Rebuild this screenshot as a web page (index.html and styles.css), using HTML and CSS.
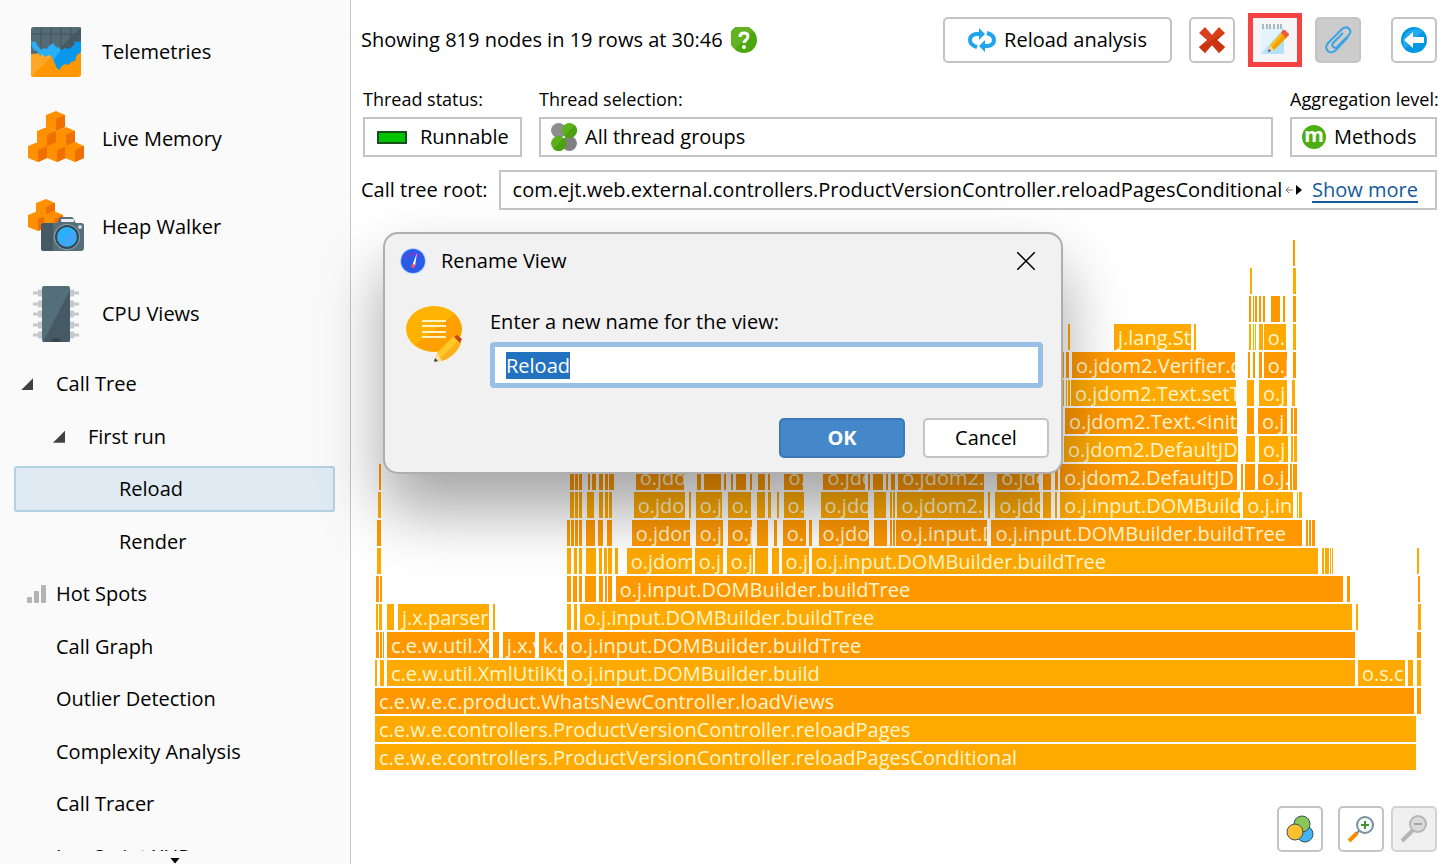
FILE: index.html
```html
<!DOCTYPE html>
<html lang="en">
<head>
    <meta charset="UTF-8">
    <meta name="viewport" content="width=device-width, initial-scale=1.0">
    <title>Call Tree - Reload</title>
    <link rel="stylesheet" href="styles.css">
</head>
<body>
    <nav class="sidebar">
        <ul class="sections">
            <li><a href="#">
                <svg class="section-icon" viewBox="0 0 56 56">
                    <rect x="3" y="3" width="50" height="50" rx="3" fill="#ff9800"/>
                    <path d="M3 53L30 26H3z" fill="#ffa726"/>
                    <path d="M3 30V6q0-3 3-3h44q3 0 3 3v20z" fill="#546a75"/>
                    <path d="M53 3L30 26h23z" fill="#455a64"/>
                    <path d="M3 10h50M13 3v20M23 3v20M33 3v20M43 3v20" stroke="#43555e" stroke-width="1"/>
                    <path d="M3 17l2 1 2-1 3 5 3 4 3-2 3 1 2-3 4-3 3 4 4 1 1 3-3 13-4-1-2-6-3-2-4 2-3-3-2 2-3-5-3-1-2-3z" fill="#29b0f6"/>
                    <path d="M32 27l5-3 4 1 5-4 1-4 3 1 3-1v11l-4 3-2 6-4 1-3 3-3-1-3 2-3 4-3-3-2-8z" fill="#0c98ea"/>
                </svg>
                Telemetries</a></li>
            <li><a href="#">
                <svg class="section-icon" viewBox="0 0 56 56">
                    <defs>
                        <g id="cube">
                            <path d="M0 4l10-4 9 4v12l-9 4-10-4z" fill="#ff9100"/>
                            <path d="M19 4v12l-9 4V8z" fill="#ef7000"/>
                        </g>
                    </defs>
                    <use href="#cube" x="18" y="0"/>
                    <use href="#cube" x="9" y="16"/>
                    <use href="#cube" x="28" y="16"/>
                    <use href="#cube" x="0" y="31"/>
                    <use href="#cube" x="19" y="31"/>
                    <use href="#cube" x="37" y="31"/>
                </svg>
                Live Memory</a></li>
            <li><a href="#">
                <svg class="section-icon" viewBox="0 0 56 56">
                    <use href="#cube" x="8" y="0"/>
                    <use href="#cube" x="0" y="12"/>
                    <use href="#cube" x="16" y="12"/>
                    <path d="M29 25l2-5q1-2 3-2h9q2 0 3 2l2 5z" fill="#546e7a"/>
                    <rect x="33" y="20" width="13" height="3" rx="1" fill="#eceff1"/>
                    <rect x="13" y="24" width="43" height="28" rx="3" fill="#546e7a"/>
                    <path d="M13 27q0-3 3-3h9v28h-9q-3 0-3-3z" fill="#455a64"/>
                    <circle cx="39" cy="38" r="13" fill="#90a4ae"/>
                    <circle cx="39" cy="38" r="12" fill="#37474f"/>
                    <circle cx="39" cy="38" r="10" fill="#29b0f6"/>
                    <path d="M46 31a10 10 0 0 1-14 14z" fill="#42a5f5"/>
                    <circle cx="52" cy="28" r="2" fill="#cfd8dc"/>
                </svg>
                Heap Walker</a></li>
            <li><a href="#">
                <svg class="section-icon" viewBox="0 0 56 56">
                    <g stroke="#c3c9cc" stroke-width="3">
                        <path d="M5 7h46M5 18h46M5 28h46M5 39h46M5 49h46"/>
                        <path d="M10 7h36M10 18h36M10 28h36M10 39h36M10 49h36" stroke-width="7"/>
                    </g>
                    <rect x="14" y="0" width="28" height="56" rx="2" fill="#546e7a"/>
                    <path d="M42 4v50q0 2-2 2H15z" fill="#455a64"/>
                    <path d="M23 56a5 4 0 0 1 10 0z" fill="#37474f"/>
                </svg>
                CPU Views</a></li>
        </ul>
        <div class="tree-clip">
            <ul class="tree">
                <li class="level-1 open"><a href="#">Call Tree</a></li>
                <li class="level-2 open"><a href="#">First run</a></li>
                <li class="level-3 selected"><a href="#">Reload</a></li>
                <li class="level-3"><a href="#">Render</a></li>
                <li class="level-1">
                    <svg class="bars-icon" viewBox="0 0 20 20" fill="#b4b4b4">
                        <rect x="0" y="13" width="5" height="6" rx="1"/>
                        <rect x="7" y="7" width="5" height="12" rx="1"/>
                        <rect x="14" y="1" width="5" height="18" rx="1"/>
                    </svg>
                    <a href="#">Hot Spots</a></li>
                <li class="level-1"><a href="#">Call Graph</a></li>
                <li class="level-1"><a href="#">Outlier Detection</a></li>
                <li class="level-1"><a href="#">Complexity Analysis</a></li>
                <li class="level-1"><a href="#">Call Tracer</a></li>
                <li class="level-1"><a href="#">JavaScript XHR</a></li>
            </ul>
        </div>
        <button class="scroll-down" aria-label="Scroll down"></button>
    </nav>

    <main class="content">
        <header class="toolbar">
            <span class="status">Showing 819 nodes in 19 rows at 30:46</span>
            <button class="help-btn" aria-label="Help">
                <svg viewBox="0 0 26 26">
                    <circle cx="13" cy="13" r="13" fill="#4ea60f"/>
                    <path d="M22 4A13 13 0 1 0 4 22z" fill="#62b323"/>
                    <path d="M9 10q0-4 4-4t4 3.500q0 2-2 3.500t-2 3" fill="none" stroke="#fff" stroke-width="3"/>
                    <circle cx="13" cy="20" r="2" fill="#fff"/>
                </svg>
            </button>
            <button class="btn reload-btn">
                <svg viewBox="0 0 28 24" fill="none" stroke="#1ea5ee" stroke-width="4">
                    <path d="M9 19Q2 17 2 12t6-6h4"/>
                    <path d="M19 5q7 2 7 7t-6 6h-3"/>
                    <path d="M11 0l6 6-6 6zM17 12l-6 6 6 6z" fill="#1ea5ee" stroke="none"/>
                </svg>
                Reload analysis</button>
            <button class="btn icon-btn delete-btn" aria-label="Delete">
                <svg viewBox="0 0 28 28">
                    <path d="M7 1l7 8 7-8 6 6-8 7 8 7-6 6-7-8-7 8-6-6 8-7-8-7z" fill="#d8401b"/>
                    <path d="M27 7l-8 7 8 7-6 6-7-8-7 8-6-6z" fill="#c93510"/>
                </svg>
            </button>
            <button class="btn icon-btn rename-btn" aria-label="Rename view">
                <svg viewBox="0 0 28 32">
                    <rect x="0" y="4" width="23" height="26" fill="#e3f4fc"/>
                    <path d="M23 4v26H0z" fill="#b3e1f7"/>
                    <path d="M2 0v5M6 0v5M9 0v5M13 0v5M17 0v5M20 0v5" stroke="#607d8b" stroke-width="1"/>
                    <path d="M7 28l2-7L21 8l5 5-13 13z" fill="#fbbc16"/>
                    <path d="M11 23L23 10l3 3-13 13z" fill="#f59f00"/>
                    <path d="M7 28l2-7 4 5z" fill="#f2d7a5"/>
                    <path d="M7 28l1-3 2 2z" fill="#37474f"/>
                    <path d="M20 9l2-3h2l4 4v1l-3 3z" fill="#ef5a3c"/>
                </svg>
            </button>
            <button class="btn icon-btn attach-btn" aria-label="Attach">
                <svg viewBox="0 0 28 28" fill="none" stroke="#3ba4e4" stroke-width="2">
                    <path d="M19 7L9 17c-2 3 1 6 4 4L25 9c4-5-2-10-7-6L4 17c-5 6 2 13 8 7l12-13" />
                </svg>
            </button>
            <button class="btn icon-btn back-btn" aria-label="Back">
                <svg viewBox="0 0 26 26">
                    <circle cx="13" cy="13" r="13" fill="#0297e3"/>
                    <path d="M22 4A13 13 0 0 0 4 22z" fill="#22a9ee"/>
                    <path d="M3 13l9-8v5h11v6H12v5z" fill="#fff"/>
                </svg>
            </button>
        </header>

        <div class="filters">
            <div class="filter">
                <label for="threadStatus">Thread status:</label>
                <div class="combo status-combo">
                    <span class="status-color"></span>
                    <select id="threadStatus"><option>Runnable</option></select>
                </div>
            </div>
            <div class="filter filter-wide">
                <label for="threadSelection">Thread selection:</label>
                <div class="combo">
                    <svg class="combo-icon" viewBox="0 0 24 26">
                        <circle cx="7" cy="7" r="7" fill="#8d8d8d"/>
                        <circle cx="17" cy="19" r="7" fill="#808080"/>
                        <circle cx="17" cy="7" r="7" fill="#5cb01c"/>
                        <circle cx="7" cy="19" r="7" fill="#5cb01c"/>
                        <path d="M22 2a7 7 0 0 1-10 10zM12 14a7 7 0 0 1-10 10z" fill="#4ba10e"/>
                    </svg>
                    <select id="threadSelection"><option>All thread groups</option></select>
                </div>
            </div>
            <div class="filter filter-level">
                <label for="aggregation">Aggregation level:</label>
                <div class="combo">
                    <span class="method-icon">m</span>
                    <select id="aggregation"><option>Methods</option></select>
                </div>
            </div>
        </div>

        <div class="root-row">
            <span>Call tree root:</span>
            <div class="root-box">
                <span class="root-name">com.ejt.web.external.controllers.ProductVersionController.reloadPagesConditional</span>
                <svg class="root-arrow" viewBox="0 0 8 8"><path d="M8 4H1M4 1L1 4l3 3" fill="none" stroke="#777"/></svg>
                <span class="root-next"></span>
                <a href="#">Show more</a>
            </div>
        </div>

        <div class="flame" id="flame"></div>

        <footer class="zoom-bar">
            <button class="btn icon-btn" aria-label="Colors">
                <svg viewBox="0 0 28 28" stroke="#37505c" stroke-width="1">
                    <circle cx="19" cy="19" r="8" fill="#42b4f5"/>
                    <circle cx="16" cy="9" r="8" fill="#8cc657"/>
                    <circle cx="9" cy="17" r="8" fill="#fbc02d"/>
                </svg>
            </button>
            <button class="btn icon-btn zoom-in" aria-label="Zoom in">
                <svg viewBox="0 0 28 28">
                    <path d="M12 16l-3 3" stroke="#607d8b" stroke-width="2"/>
                    <path d="M10 18l-8 8" stroke="#fb8c00" stroke-width="4"/>
                    <circle cx="18" cy="10" r="8" fill="#f3f8fb" stroke="#78909c" stroke-width="2"/>
                    <path d="M14 10h8M18 6v8" stroke="#43912f" stroke-width="2"/>
                </svg>
            </button>
            <button class="btn icon-btn" aria-label="Zoom out" disabled>
                <svg viewBox="0 0 28 28">
                    <path d="M13 15L2 26" stroke="#b5b5b5" stroke-width="4"/>
                    <circle cx="18" cy="9" r="8" fill="#dadada" stroke="#b5b5b5" stroke-width="2"/>
                    <path d="M14 9h8" stroke="#a5a5a5" stroke-width="2"/>
                </svg>
            </button>
        </footer>
    </main>

    <dialog class="rename-dialog" open aria-labelledby="dialogTitle">
        <div class="dialog-head">
            <svg class="app-icon" viewBox="0 0 26 26">
                <circle cx="13" cy="13" r="13" fill="#b5d5fb"/>
                <circle cx="13" cy="13" r="12" fill="#2a5be8"/>
                <path d="M5 10q8-8 15-1" fill="none" stroke="#7a3bd0" stroke-width="2"/>
                <path d="M17 5l-2 13h-3z" fill="#fff"/>
                <circle cx="13" cy="18" r="2" fill="#f0506a"/>
            </svg>
            <h2 id="dialogTitle">Rename View</h2>
            <button class="close-btn" aria-label="Close">
                <svg viewBox="0 0 18 18"><path d="M0 0l18 18M18 0L0 18" stroke="#000" stroke-width="1.500"/></svg>
            </button>
        </div>
        <form class="dialog-body" method="dialog">
            <svg class="note-icon" viewBox="0 0 56 56">
                <ellipse cx="28" cy="23" rx="28" ry="23" fill="#ffb300"/>
                <path d="M49 8Q62 24 49 39 30 52 9 39z" fill="#ffa000"/>
                <path d="M16 15h24M16 20h24M16 26h24M16 31h24" stroke="#fff3c4" stroke-width="2"/>
                <path d="M28 56l3-9 17-17 7 5c0 9-12 19-20 20z" fill="#ffca28"/>
                <path d="M34 52l18-17 3 1c-2 8-12 18-20 19z" fill="#fbb01d"/>
                <path d="M28 56l3-9 5 8z" fill="#f6dfb0"/>
                <path d="M28 56l1-4 3 3z" fill="#37474f"/>
                <path d="M48 31l3-2 5 4-2 4z" fill="#c8451c"/>
            </svg>
            <div class="field">
                <label for="viewName">Enter a new name for the view:</label>
                <input type="text" id="viewName" value="Reload" autocomplete="off">
            </div>
            <div class="dialog-buttons">
                <button class="btn ok-btn">OK</button>
                <button class="btn cancel-btn">Cancel</button>
            </div>
        </form>
    </dialog>

    <script src="flame.js"></script>
</body>
</html>
```
FILE: styles.css
```css
* {
    box-sizing: border-box;
}
body {
    margin: 0;
    display: flex;
    height: 100vh;
    overflow: hidden;
    font-family: "Open Sans", "Noto Sans", sans-serif;
    font-size: 20px;
    line-height: 28px;
    color: #000;
    background: #fff;
}
button, input, select {
    font: inherit;
    color: inherit;
}
ul {
    list-style: none;
    margin: 0;
    padding: 0;
}
svg {
    display: block;
    flex: none;
}

/* sidebar */
.sidebar {
    flex: none;
    width: 351px;
    display: flex;
    flex-direction: column;
    background: #fafafa;
    border-right: 1px solid #c8c8c8;
}
.sidebar a {
    color: inherit;
    text-decoration: none;
}
.sections {
    flex: none;
    display: grid;
    grid-auto-rows: 1fr;
    height: 358px;
    padding-top: 8px;
}
.sections a {
    display: flex;
    align-items: center;
    gap: 18px;
    height: 100%;
    padding-left: 28px;
}
.section-icon {
    width: 56px;
    height: 56px;
}
.tree-clip {
    flex: 1;
    min-height: 0;
    overflow: hidden;
}
.tree {
    display: grid;
    grid-auto-rows: 1fr;
    height: 525px;
    padding: 0 15px 0 14px;
}
.tree li {
    position: relative;
    display: flex;
    align-items: center;
}
.level-1 {
    padding-left: 42px;
}
.level-2 {
    padding-left: 74px;
}
.level-3 {
    padding-left: 105px;
}
.open::before {
    content: "";
    width: 12px;
    height: 12px;
    margin-left: -35px;
    margin-right: 23px;
    background: #404040;
    clip-path: polygon(100% 0, 100% 100%, 0 100%);
}
.tree .selected {
    height: 46px;
    align-self: center;
    background: #dfeaf2;
    box-shadow: inset 0 0 0 2px #b4d0e3;
    border-radius: 3px;
}
.bars-icon {
    position: absolute;
    left: 13px;
    width: 20px;
    height: 20px;
}
.scroll-down {
    height: 13px;
    padding: 6px 0 0;
    border: 0;
    background: none;
}
.scroll-down::before {
    content: "";
    display: block;
    width: 10px;
    height: 6px;
    margin: 0 auto;
    background: #000;
    clip-path: polygon(0 0, 100% 0, 50% 100%);
}

/* toolbar */
.content {
    flex: 1;
    min-width: 0;
    display: flex;
    flex-direction: column;
    padding: 16px 6px 12px 10px;
}
.toolbar {
    display: flex;
    align-items: center;
    height: 47px;
}
.help-btn {
    width: 26px;
    margin-left: 8px;
    padding: 0;
    border: 0;
    background: none;
}
.btn {
    display: flex;
    align-items: center;
    justify-content: center;
    border: 2px solid #c4c4c4;
    border-radius: 5px;
    background: #fff;
    padding: 0;
}
.icon-btn {
    width: 46px;
    height: 46px;
}
.icon-btn svg {
    width: 28px;
}
.reload-btn {
    width: 229px;
    height: 46px;
    margin-left: auto;
    gap: 8px;
}
.reload-btn svg {
    width: 28px;
}
.delete-btn {
    margin-left: 17px;
}
.rename-btn {
    margin-left: 17px;
    border-color: #f5f5f7;
    border-radius: 0;
    background: #f5f5f7;
    outline: 5px solid #f54343;
    outline-offset: -1px;
}
.attach-btn {
    margin-left: 17px;
    background: #ccc;
}
.back-btn {
    margin-left: 30px;
}
.back-btn svg {
    width: 26px;
}

/* filters */
.filters {
    display: flex;
    gap: 17px;
    margin-top: 24px;
    padding-left: 2px;
}
.filter {
    width: 159px;
}
.filter-wide {
    flex: 1;
}
.filter-level {
    width: 147px;
}
.filter label {
    display: block;
    font-size: 18px;
    height: 30px;
    line-height: 25px;
    white-space: nowrap;
}
.combo {
    display: flex;
    align-items: center;
    gap: 8px;
    height: 40px;
    padding-left: 10px;
    border: 2px solid #c4c4c4;
}
.combo select {
    flex: 1;
    min-width: 0;
    appearance: none;
    border: 0;
    padding: 0;
    background: none;
}
.combo-icon {
    width: 26px;
    height: 28px;
}
.status-combo {
    gap: 13px;
    padding-left: 12px;
}
.status-color {
    width: 30px;
    height: 13px;
    border: 2px solid #1c4d1c;
    background: #00c400;
}
.method-icon {
    width: 24px;
    height: 24px;
    border-radius: 50%;
    background: #4fae16;
    color: #fff;
    font-weight: bold;
    line-height: 20px;
    text-align: center;
}
.root-row {
    display: flex;
    align-items: center;
    gap: 11px;
    margin-top: 13px;
}
.root-row > span {
    flex: none;
}
.root-box {
    flex: 1;
    min-width: 0;
    display: flex;
    align-items: center;
    height: 40px;
    padding-left: 12px;
    border: 2px solid #c4c4c4;
    white-space: nowrap;
}
.root-arrow {
    width: 8px;
    height: 8px;
    margin-left: 3px;
}
.root-next {
    margin-left: 3px;
    border: 5px solid transparent;
    border-left: 6px solid #000;
    border-right: 0;
}
.root-box a {
    margin: 0 17px 0 auto;
    color: #145a9c;
    text-decoration-thickness: 2px;
    text-underline-offset: 4px;
}

/* flame graph */
.flame {
    margin: 30px 0 0 14px;
}
.flame-row {
    display: flex;
    height: 26px;
    margin-bottom: 2px;
}
.flame-bar {
    flex: none;
    overflow: hidden;
    background: #ffaa00;
    color: #fff5cf;
    white-space: nowrap;
    text-indent: 4px;
}
.flame-row.dark .flame-bar {
    background: #ff9800;
}

.zoom-bar {
    display: flex;
    justify-content: flex-end;
    gap: 7px;
    margin-top: auto;
}
.zoom-in {
    margin-left: 8px;
}
.btn:disabled {
    background: #f0f0f0;
    border-color: #d2d2d2;
}

/* rename dialog */
.rename-dialog {
    position: absolute;
    left: 383px;
    top: 232px;
    width: 680px;
    margin: 0;
    padding: 13px 13px 14px 15px;
    border: 2px solid #aeaeae;
    border-radius: 15px;
    background: #f1f1f1;
    color: #000;
    box-shadow: 0 36px 64px rgba(0, 0, 0, 0.36);
}
.dialog-head {
    display: flex;
    align-items: center;
    gap: 15px;
}
.dialog-head h2 {
    margin: 0;
    font-size: 20px;
    font-weight: normal;
}
.app-icon {
    width: 26px;
    height: 26px;
}
.close-btn {
    margin-left: auto;
    margin-right: 13px;
    padding: 0;
    border: 0;
    background: none;
}
.close-btn svg {
    width: 18px;
    height: 18px;
}
.dialog-body {
    display: grid;
    grid-template-columns: 56px 1fr;
    column-gap: 28px;
    padding: 31px 5px 0 6px;
}
.note-icon {
    width: 56px;
    height: 56px;
}
.field label {
    display: block;
    padding-top: 2px;
}
.field input {
    display: block;
    width: 100%;
    height: 46px;
    margin-top: 6px;
    padding: 0 11px;
    border: 5px solid #98c0e7;
    border-radius: 4px;
    outline: 0;
    background: #fff;
}
.field input::selection {
    background: #2272bf;
    color: #fff;
}
.dialog-buttons {
    grid-column: 1 / -1;
    display: flex;
    justify-content: flex-end;
    gap: 18px;
    margin: 30px -6px 0 0;
}
.dialog-buttons .btn {
    width: 126px;
    height: 40px;
}
.dialog-buttons .ok-btn {
    background: #4488c9;
    border-color: #3c7ab6;
    color: #fff;
    font-weight: bold;
}
```
FILE: flame.js
```javascript
// total width of the time axis, all bars are [start, end, label] on it
var TOTAL = 1062;

// top row first
var rows = [
    [[918, 920]],
    [[875, 877], [918, 921]],
    [[685, 687], [874, 876], [878, 879], [880, 882], [884, 886], [888, 890], [896, 905], [908, 910], [918, 921]],
    [[685, 688], [693, 695], [739, 816, 'j.lang.St'], [819, 821], [874, 876], [878, 879], [880, 881], [884, 888], [889, 911, 'o.'], [918, 921]],
    [[685, 689], [691, 694], [697, 860, 'o.jdom2.Verifier.c'], [873, 875], [878, 880], [884, 887], [889, 912, 'o.j'], [918, 921]],
    [[685, 689], [691, 692], [693, 695], [696, 861, 'o.jdom2.Text.setT'], [872, 879], [884, 912, 'o.j'], [917, 920]],
    [[690, 862, 'o.jdom2.Text.<init'], [872, 879], [883, 912, 'o.j'], [916, 918], [919, 922]],
    [[689, 863, 'o.jdom2.DefaultJD'], [871, 880], [884, 913, 'o.j'], [916, 918], [919, 922]],
    [[4, 6], [195, 199], [200, 203], [204, 207], [213, 215], [217, 221], [224, 228], [230, 233], [234, 239], [261, 309, 'o.jdo'], [322, 326], [329, 346], [349, 351], [356, 358], [361, 371], [375, 377], [383, 390], [393, 396], [410, 429, 'o.'], [449, 491, 'o.jdo'], [494, 496], [499, 509], [512, 514], [517, 521], [524, 610, 'o.jdom2.'], [623, 665, 'o.jdo'], [669, 677], [681, 684], [686, 863, 'o.jdom2.DefaultJD'], [867, 869], [871, 881], [884, 914, 'o.j.'], [916, 918], [919, 923]],
    [[3, 6], [195, 199], [200, 203], [204, 207], [212, 219], [224, 228], [230, 233], [234, 237], [259, 310, 'o.jdo'], [314, 316], [321, 347, 'o.j'], [353, 376, 'o.'], [382, 390], [393, 396], [402, 404], [409, 429, 'o.'], [446, 493, 'o.jdo'], [499, 511], [515, 517], [518, 520], [523, 610, 'o.jdom2.l'], [614, 616], [621, 666, 'o.jdo'], [669, 677], [681, 683], [686, 866, 'o.j.input.DOMBuild'], [869, 919, 'o.j.in'], [923, 924], [925, 928]],
    [[2, 6], [192, 195], [196, 199], [200, 203], [204, 207], [211, 220], [223, 228], [232, 237], [257, 315, 'o.jdom'], [321, 348, 'o.j'], [353, 377, 'o.j'], [382, 393], [399, 402], [408, 431, 'o.'], [434, 437], [444, 494, 'o.jdo'], [499, 512], [515, 517], [518, 520], [522, 613, 'o.j.input.D'], [617, 928, 'o.j.input.DOMBuilder.buildTree'], [932, 934], [935, 937], [938, 941]],
    [[2, 6], [192, 196], [199, 202], [204, 207], [211, 221], [224, 227], [229, 232], [233, 237], [240, 243], [252, 317, 'o.jdom'], [320, 348, 'o.j'], [352, 378, 'o.j'], [380, 393], [397, 404], [407, 434, 'o.j'], [437, 943, 'o.j.input.DOMBuilder.buildTree'], [947, 949], [950, 952], [953, 955], [956, 957], [958, 959], [1043, 1045]],
    [[1, 4], [5, 7], [192, 196], [198, 202], [204, 207], [210, 221], [224, 228], [230, 232], [233, 237], [241, 968, 'o.j.input.DOMBuilder.buildTree'], [972, 975], [1043, 1045]],
    [[1, 3], [4, 7], [12, 19], [23, 114, 'j.x.parsers'], [118, 120], [192, 196], [199, 202], [205, 977, 'o.j.input.DOMBuilder.buildTree'], [981, 983], [1043, 1046]],
    [[1, 4], [5, 7], [8, 9], [12, 114, 'c.e.w.util.X'], [118, 124], [128, 160, 'j.x.v'], [164, 188, 'k.c'], [192, 980, 'o.j.input.DOMBuilder.buildTree'], [1042, 1046]],
    [[0, 2], [5, 9], [12, 189, 'c.e.w.util.XmlUtilKt.'], [192, 980, 'o.j.input.DOMBuilder.build'], [983, 1030, 'o.s.c'], [1033, 1038], [1042, 1046]],
    [[0, 1039, 'c.e.w.e.c.product.WhatsNewController.loadViews'], [1042, 1046]],
    [[0, 1041, 'c.e.w.e.controllers.ProductVersionController.reloadPages']],
    [[0, 1041, 'c.e.w.e.controllers.ProductVersionController.reloadPagesConditional']]
];

var flame = document.getElementById('flame');

rows.forEach(function (bars, i) {
    var row = document.createElement('div');
    row.className = 'flame-row' + (i % 2 === 0 && i < rows.length - 1 ? ' dark' : '');
    var last = 0;
    bars.forEach(function (b) {
        var bar = document.createElement('div');
        bar.className = 'flame-bar';
        bar.style.marginLeft = (b[0] - last) / TOTAL * 100 + '%';
        bar.style.width = (b[1] - b[0]) / TOTAL * 100 + '%';
        bar.textContent = b[2] || '';
        last = b[1];
        row.appendChild(bar);
    });
    flame.appendChild(row);
});

var nameField = document.getElementById('viewName');
nameField.focus();
nameField.select();
```
